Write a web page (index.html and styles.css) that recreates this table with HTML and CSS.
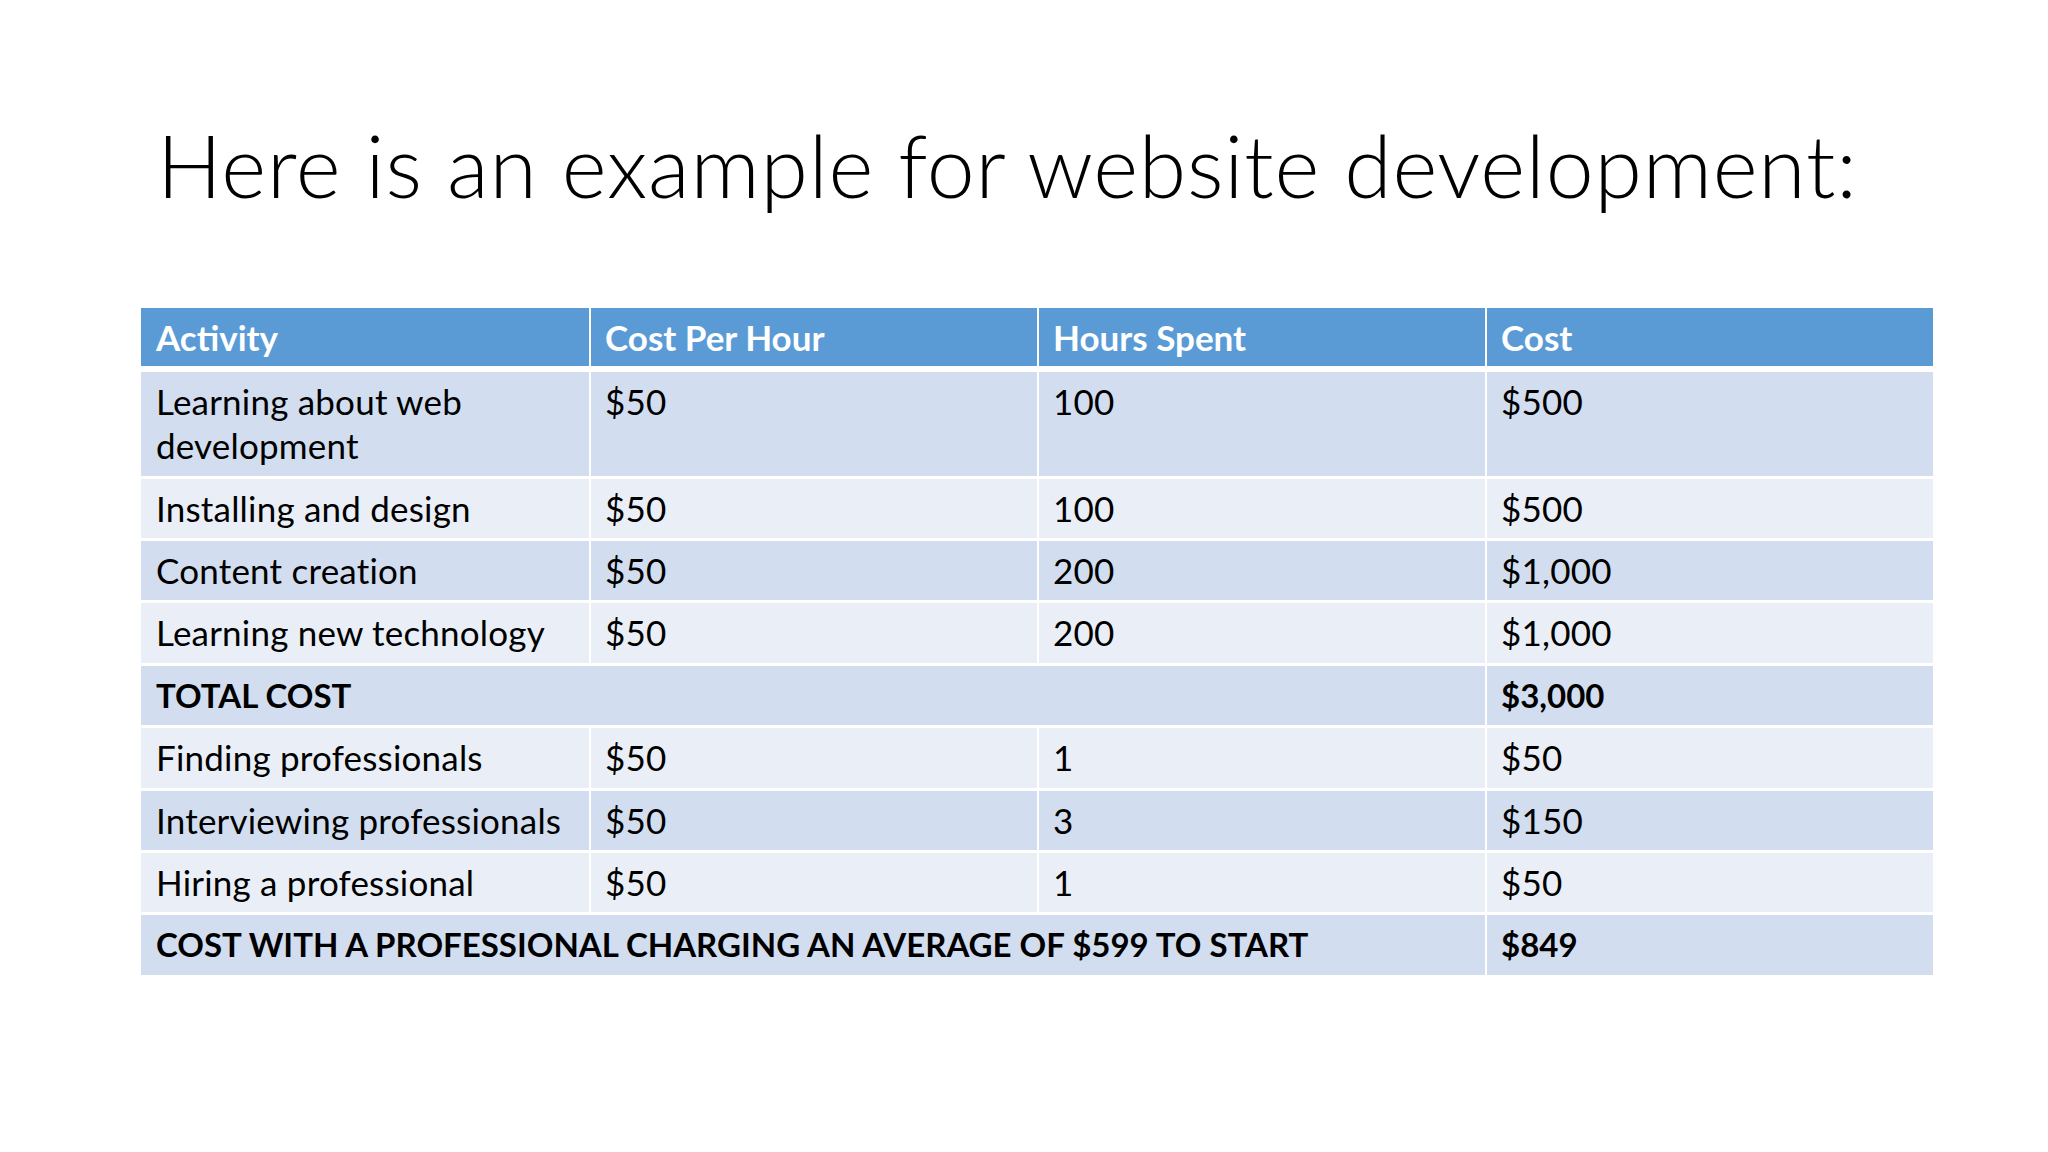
FILE: index.html
```html
<!DOCTYPE html>
<html lang="en">
<head>
<meta charset="utf-8">
<title>Website development cost example</title>
<link rel="stylesheet" href="styles.css">
</head>
<body>
<main class="slide">
  <h1 class="title">Here is an example for website development:</h1>
  <table class="costs">
    <colgroup>
      <col class="c"><col class="c"><col class="c"><col class="c">
    </colgroup>
    <thead>
      <tr><th>Activity</th><th>Cost Per Hour</th><th>Hours Spent</th><th>Cost</th></tr>
    </thead>
    <tbody>
      <tr class="odd"><td>Learning about web development</td><td>$50</td><td>100</td><td>$500</td></tr>
      <tr class="even"><td>Installing and design</td><td>$50</td><td>100</td><td>$500</td></tr>
      <tr class="odd"><td>Content creation</td><td>$50</td><td>200</td><td>$1,000</td></tr>
      <tr class="even"><td>Learning new technology</td><td>$50</td><td>200</td><td>$1,000</td></tr>
      <tr class="odd strong"><td colspan="3">TOTAL COST</td><td>$3,000</td></tr>
      <tr class="even"><td>Finding professionals</td><td>$50</td><td>1</td><td>$50</td></tr>
      <tr class="odd"><td>Interviewing professionals</td><td>$50</td><td>3</td><td>$150</td></tr>
      <tr class="even"><td>Hiring a professional</td><td>$50</td><td>1</td><td>$50</td></tr>
      <tr class="odd strong"><td colspan="3">COST WITH A PROFESSIONAL CHARGING AN AVERAGE OF $599 TO START</td><td>$849</td></tr>
    </tbody>
  </table>
</main>
</body>
</html>
```
FILE: styles.css
```css
html, body {
  margin: 0;
  padding: 0;
  background: #ffffff;
}
.slide {
  width: 2048px;
  height: 1152px;
  box-sizing: border-box;
  padding-top: 113px;
  background: #ffffff;
  overflow: hidden;
}
.title {
  margin: 0 0 0 157px;
  font-family: Lato, "Open Sans", sans-serif;
  font-weight: 300;
  font-size: 86px;
  letter-spacing: 0.8px;
  line-height: 1.2;
  color: #000000;
  white-space: nowrap;
}
.costs {
  margin: 92px 0 0 141px;
  width: 1792px;
  table-layout: fixed;
  border-collapse: separate;
  border-spacing: 0;
  font-family: Lato, "Open Sans", sans-serif;
  font-size: 35px;
  letter-spacing: 0.2px;
  line-height: 44px;
  color: #000000;
}
.costs col.c {
  width: 448px;
}
.costs th, .costs td {
  text-align: left;
  vertical-align: top;
  padding: 7px 14px 8px 14px;
  border-bottom: 3px solid #ffffff;
  border-left: 2px solid #ffffff;
}
.costs td {
  padding-bottom: 8.4px;
}
.costs th:first-child, .costs td:first-child {
  border-left: 0;
  padding-left: 15px;
}
.costs th {
  background: #5b9bd5;
  color: #ffffff;
  font-weight: 700;
  letter-spacing: 0;
  padding-bottom: 7px;
  border-bottom: 6px solid #ffffff;
}
.costs tr.odd td {
  background: #d2deef;
}
.costs tr.even td {
  background: #eaeff7;
}
.costs tr.strong td {
  font-weight: 700;
  font-size: 33px;
  letter-spacing: 0;
}
```
